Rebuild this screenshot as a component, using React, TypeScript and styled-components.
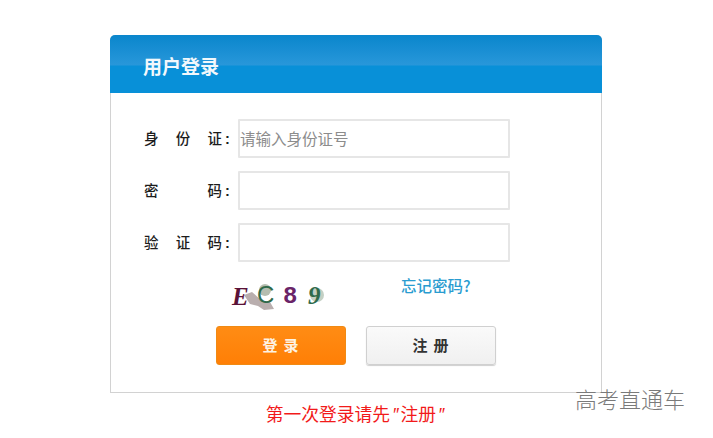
import styled, { createGlobalStyle } from "styled-components";

const GlobalStyle = createGlobalStyle`
  html, body {
    margin: 0;
    padding: 0;
    background: #fff;
    font-family: "Noto Sans CJK SC", "Liberation Sans", sans-serif;
  }
`;

const Page = styled.main`
  position: relative;
  width: 713px;
  height: 438px;
  padding: 35px 0 0 110px;
  box-sizing: border-box;
  overflow: hidden;
`;

const Card = styled.section`
  width: 492px;
  height: 358px;
  box-sizing: border-box;
  border: 1px solid #d2d2d2;
  border-top: none;
  border-radius: 5px 5px 0 0;
`;

const Header = styled.header`
  height: 58px;
  margin: 0 -1px;
  padding: 2px 0 0 33px;
  box-sizing: border-box;
  display: flex;
  align-items: center;
  color: #f2f8fc;
  font-size: 19px;
  font-weight: 700;
  border-radius: 5px 5px 0 0;
  background: linear-gradient(to bottom, #0a86cc 0, #2897da 30px, #0890d8 31px, #0890d8 100%);
`;

const Form = styled.form`
  display: flex;
  flex-direction: column;
  padding: 26px 0 0 33px;
  gap: 13px;
`;

const Row = styled.div`
  display: flex;
  align-items: center;
  gap: 7px;
`;

const Label = styled.label`
  width: 87px;
  display: flex;
  align-items: baseline;
  padding-bottom: 2px;
  color: #1c1c1c;
  font-size: 14.5px;
  font-weight: 500;
`;

const LabelChars = styled.span`
  width: 78px;
  display: flex;
  justify-content: space-between;
`;

const Colon = styled.span`
  font-weight: 700;
  font-family: "Liberation Sans", sans-serif;
  margin-left: 3px;
`;

const TextInput = styled.input`
  width: 272px;
  height: 39px;
  box-sizing: border-box;
  border: 2px solid #e6e6e6;
  border-radius: 1px;
  padding: 0 0 2px;
  font-family: inherit;
  font-size: 15.5px;
  background: #fff;
  &::placeholder {
    color: #8c8c8c;
    opacity: 1;
  }
`;

const CaptchaRow = styled.div`
  display: flex;
  align-items: flex-start;
  height: 37px;
  margin-top: 1px;
  padding-left: 86px;
`;

const Captcha = styled.svg`
  width: 106px;
  height: 37px;
  display: block;
`;

const ForgotLink = styled.a`
  margin-left: 65px;
  margin-top: -3px;
  color: #2a9cd0;
  font-size: 15.5px;
  font-weight: 500;
  line-height: 24px;
`;

const Buttons = styled.div`
  display: flex;
  gap: 20px;
  padding-left: 72px;
`;

const Button = styled.button<{ $primary?: boolean }>`
  width: 130px;
  height: 39px;
  padding: 0 0 2px 5px;
  box-sizing: border-box;
  border-radius: 3px;
  font-family: inherit;
  font-size: 15px;
  font-weight: 700;
  letter-spacing: 6px;
  border: ${(p) => (p.$primary ? "1px solid #f08a14" : "1px solid #d0d0d0")};
  color: ${(p) => (p.$primary ? "#fdf3e4" : "#333")};
  background: ${(p) =>
    p.$primary
      ? "linear-gradient(to bottom, #ff8c14, #ff7f06)"
      : "linear-gradient(to bottom, #fafafa, #f0f0f0)"};
  box-shadow: ${(p) => (p.$primary ? "none" : "0 1px 1px #cfcfcf")};
`;

const Notice = styled.p`
  width: 492px;
  margin: 8px 0 0;
  text-align: center;
  color: #f21a1a;
  font-size: 17.8px;
  line-height: 24px;
`;

const Quote = styled.span`
  font-family: "Liberation Sans", sans-serif;
  font-style: italic;
  margin: 0 2px;
`;

const Watermark = styled.div`
  position: absolute;
  left: 575px;
  top: 383px;
  color: #7a7a7a;
  font-size: 22px;
  line-height: 30px;
  font-weight: 300;
`;

const chars = (list: string[]) => list.map((c, i) => <span key={i}>{c}</span>);

export default function App() {
  return (
    <>
      <GlobalStyle />
      <Page>
        <Card>
          <Header>用户登录</Header>
          <Form>
            <Row>
              <Label>
                <LabelChars>{chars(["身", "份", "证"])}</LabelChars>
                <Colon>:</Colon>
              </Label>
              <TextInput placeholder="请输入身份证号" />
            </Row>
            <Row>
              <Label>
                <LabelChars>{chars(["密", "码"])}</LabelChars>
                <Colon>:</Colon>
              </Label>
              <TextInput type="password" />
            </Row>
            <Row>
              <Label>
                <LabelChars>{chars(["验", "证", "码"])}</LabelChars>
                <Colon>:</Colon>
              </Label>
              <TextInput />
            </Row>
            <CaptchaRow>
              <Captcha viewBox="0 0 106 37">
                <path d="M14 19 L22 16 L32 25 L40 26 L44 33 L34 34 L28 30 L20 28 Z" fill="#b9aeae" />
                <circle cx="35" cy="14" r="6" fill="#b5bdb0" />
                <circle cx="87" cy="19" r="7" fill="#c4d0c4" />
                <text x="2" y="29" fontFamily="Liberation Serif" fontStyle="italic" fontWeight="700" fontSize="25" fill="#5a1238">E</text>
                <text x="27" y="27" fontFamily="Liberation Sans" fontSize="24" fill="#2f6a4a">C</text>
                <text x="53" y="27" fontFamily="Liberation Mono" fontWeight="700" fontSize="24" fill="#6a2468">8</text>
                <text x="78" y="28" fontFamily="Liberation Serif" fontStyle="italic" fontWeight="700" fontSize="25" fill="#2f6a4a">9</text>
              </Captcha>
              <ForgotLink>忘记密码?</ForgotLink>
            </CaptchaRow>
            <Buttons>
              <Button $primary type="button">登录</Button>
              <Button type="button">注册</Button>
            </Buttons>
          </Form>
        </Card>
        <Notice>
          第一次登录请先<Quote>″</Quote>注册<Quote>″</Quote>
        </Notice>
        <Watermark>高考直通车</Watermark>
      </Page>
    </>
  );
}
